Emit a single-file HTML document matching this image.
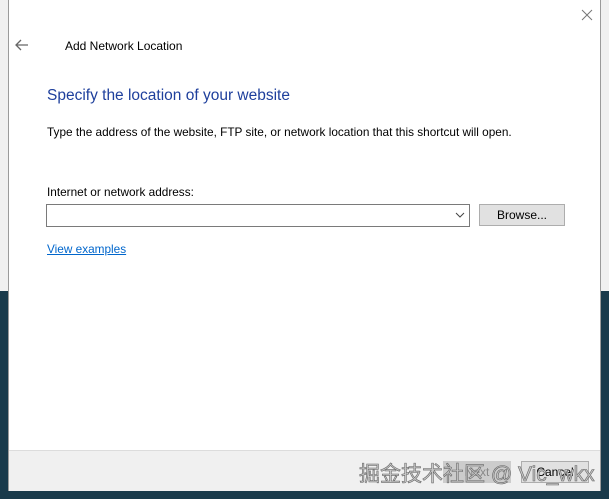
<!DOCTYPE html>
<html><head><meta charset="utf-8"><style>
body{margin:0;width:609px;height:499px;overflow:hidden;background:#f0f0f0;position:relative;font-family:"Segoe UI","Liberation Sans",sans-serif;}
.dark{position:absolute;left:0;top:291px;width:609px;height:208px;background:#193a4b;}
.dlg{position:absolute;left:8px;top:0;width:593px;height:491px;background:#fff;border:1px solid #9a9a9a;border-top:none;box-sizing:border-box;}
.t{position:absolute;white-space:nowrap;color:#000;font-size:12px;}
.bar{position:absolute;left:0;top:450px;width:591px;height:40px;background:#f0f0f0;border-top:1px solid #dcdcdc;}
.btn{position:absolute;height:22px;box-sizing:border-box;font-size:12px;text-align:center;line-height:20px;}
</style></head><body>
<div class="dark"></div>
<div class="dlg">
<svg style="position:absolute;left:572px;top:9px" width="12" height="12"><path d="M1 1L11 11M11 1L1 11" stroke="#777" stroke-width="1"/></svg>
<svg style="position:absolute;left:6px;top:39px" width="14" height="12"><path d="M1 6H13M6 1L1 6L6 11" stroke="#666" stroke-width="1.3" fill="none"/></svg>
<div class="t" style="left:56px;top:39px;font-size:12px">Add Network Location</div>
<div class="t" style="left:38px;top:87px;font-size:15.5px;color:#1e3f9c">Specify the location of your website</div>
<div class="t" style="left:38px;top:125px;font-size:11.8px">Type the address of the website, FTP site, or network location that this shortcut will open.</div>
<div class="t" style="left:38px;top:185px;font-size:11.8px">Internet or network address:</div>
<div style="position:absolute;left:37px;top:204px;width:424px;height:23px;border:1px solid #7a7a7a;box-sizing:border-box"></div>
<svg style="position:absolute;left:446px;top:212px" width="10" height="7"><path d="M1 1L5 5L9 1" stroke="#444" fill="none"/></svg>
<div class="btn" style="left:470px;top:204px;width:86px;background:#e1e1e1;border:1px solid #adadad">Browse...</div>
<div class="t" style="left:38px;top:242px;font-size:11.8px;color:#0066cc;text-decoration:underline">View examples</div>
<div class="bar">
<div class="btn" style="left:434px;top:10px;width:68px;background:#ccc;border:1px solid #ccc;color:#888">Next</div>
<div class="btn" style="left:512px;top:10px;width:68px;background:#e1e1e1;border:1px solid #adadad">Cancel</div>
<div class="t" style="left:350px;top:7px;font-size:21px;color:#c8c8c8;-webkit-text-stroke:0.6px #666;font-family:'Liberation Sans','Noto Sans CJK SC',sans-serif">掘金技术社区 @ Vic_wkx</div>
</div>
</div>
</body></html>
